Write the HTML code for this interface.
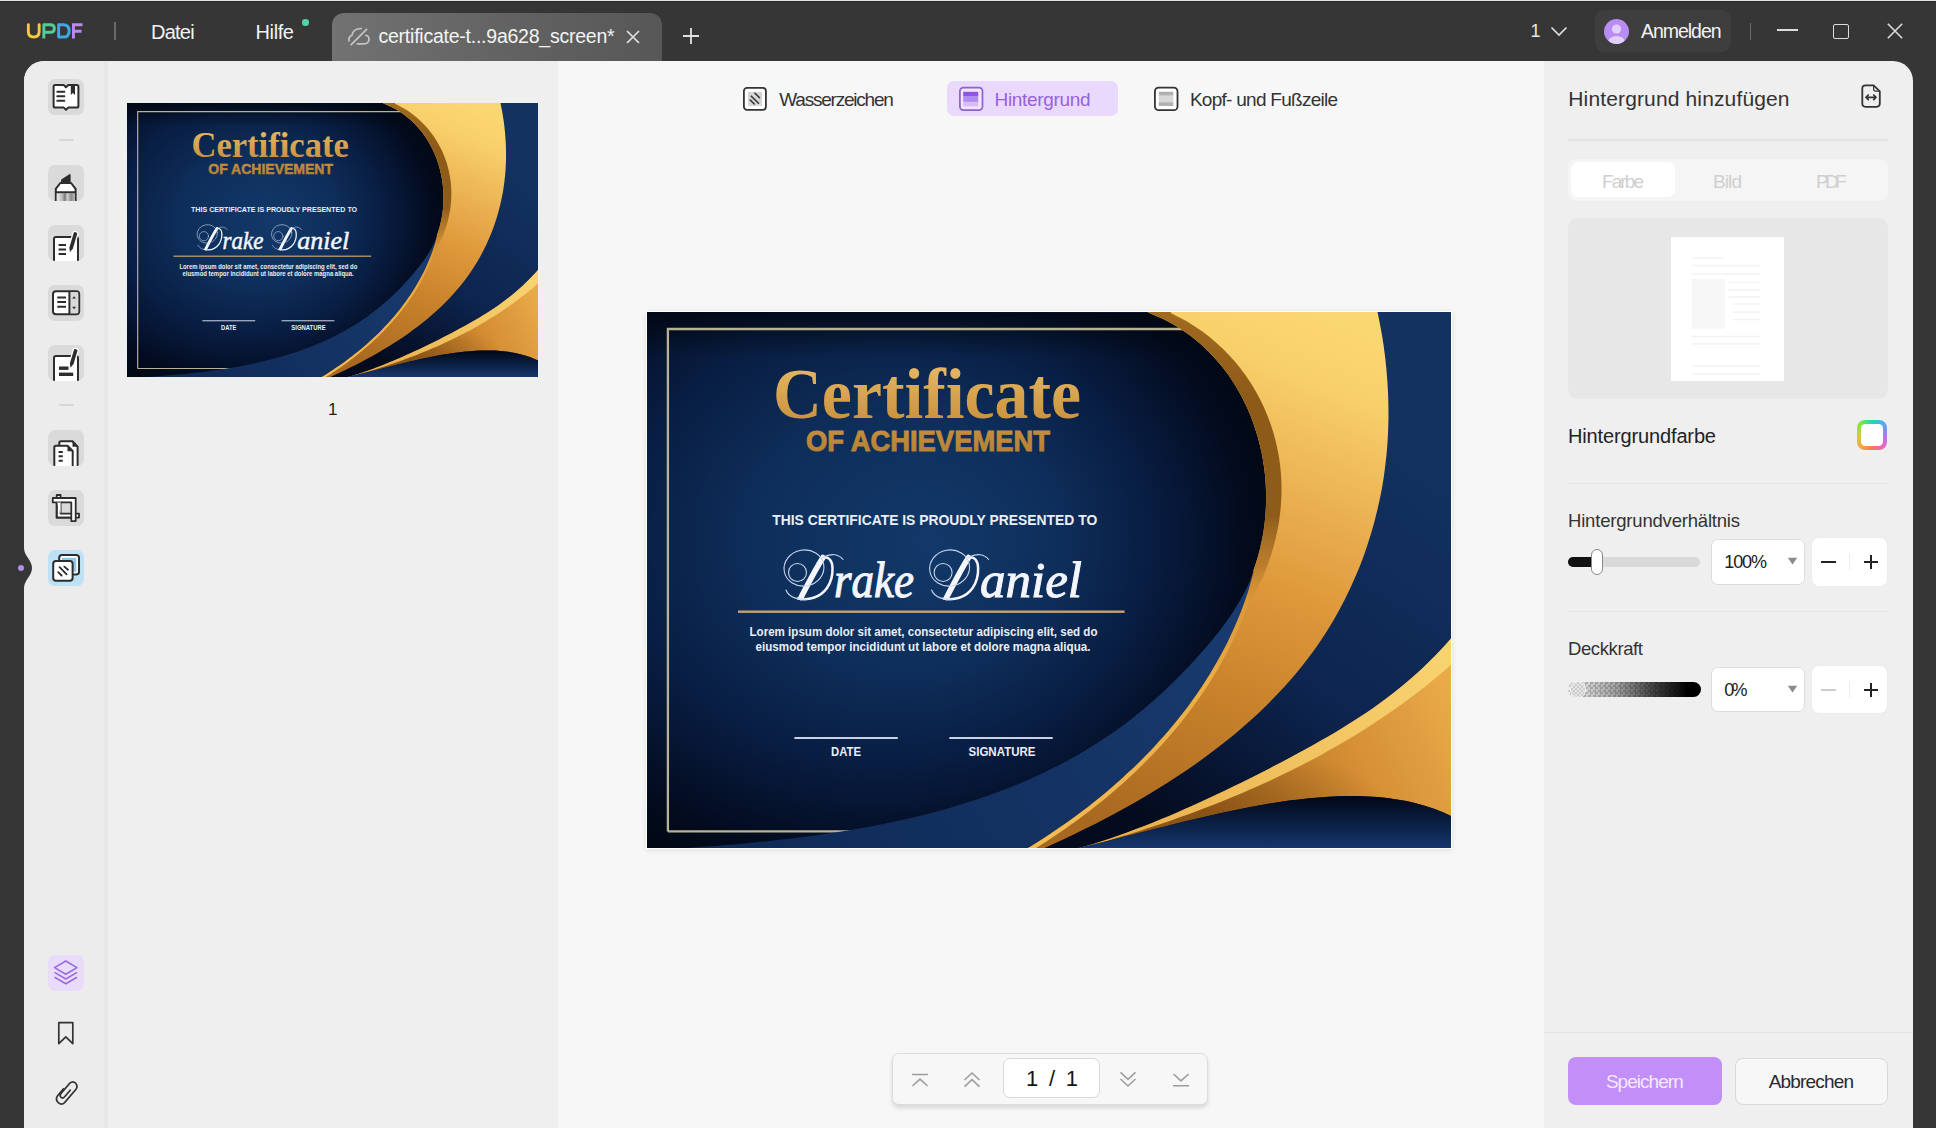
<!DOCTYPE html>
<html><head><meta charset="utf-8">
<style>
*{margin:0;padding:0;box-sizing:border-box}
html,body{width:1936px;height:1128px;overflow:hidden;background:#363636;font-family:"Liberation Sans",sans-serif}
.a{position:absolute}
.t{position:absolute;white-space:nowrap;line-height:1}
svg.a{overflow:visible}
.ib{position:absolute;left:48px;width:36px;height:36px;border-radius:7px;background:#dadada;overflow:hidden}
.ib svg{position:absolute;left:0;top:0}
</style></head>
<body>
<svg width="0" height="0" style="position:absolute;left:0;top:0"><defs>
<radialGradient id="gNavy" gradientUnits="userSpaceOnUse" cx="210" cy="225" r="440" fx="285" fy="232" gradientTransform="translate(210 225) scale(1 0.85) translate(-210 -225)">
<stop offset="0" stop-color="#12396a"/><stop offset="0.35" stop-color="#0e2e5a"/><stop offset="0.62" stop-color="#081c40"/><stop offset="0.85" stop-color="#030b1e"/><stop offset="1" stop-color="#01060f"/></radialGradient>
<linearGradient id="gTop" gradientUnits="userSpaceOnUse" x1="0" y1="0" x2="0" y2="45">
<stop offset="0" stop-color="#01060f" stop-opacity="0.75"/><stop offset="1" stop-color="#01060f" stop-opacity="0"/></linearGradient>
<linearGradient id="gBase" gradientUnits="userSpaceOnUse" x1="780" y1="150" x2="520" y2="520">
<stop offset="0" stop-color="#13325f"/><stop offset="0.55" stop-color="#0d2550"/><stop offset="1" stop-color="#040b1e"/></linearGradient>
<linearGradient id="gRib" gradientUnits="userSpaceOnUse" x1="600" y1="270" x2="150" y2="536">
<stop offset="0" stop-color="#193b70"/><stop offset="1" stop-color="#0f2b58"/></linearGradient>
<linearGradient id="gGold1" gradientUnits="userSpaceOnUse" x1="680" y1="0" x2="470" y2="520">
<stop offset="0" stop-color="#fbd772"/><stop offset="0.12" stop-color="#f8d06a"/><stop offset="0.3" stop-color="#ecb454"/><stop offset="0.48" stop-color="#df9a3c"/><stop offset="0.68" stop-color="#cb842c"/><stop offset="1" stop-color="#a86820"/></linearGradient>
<linearGradient id="gBrown" gradientUnits="userSpaceOnUse" x1="0" y1="0" x2="0" y2="300">
<stop offset="0" stop-color="#a06a20"/><stop offset="0.3" stop-color="#8d5a18"/><stop offset="0.68" stop-color="#8f5d1a" stop-opacity="1"/><stop offset="0.85" stop-color="#b07428" stop-opacity="0.75"/><stop offset="1" stop-color="#d69035" stop-opacity="0"/></linearGradient>
<linearGradient id="gGold2" gradientUnits="userSpaceOnUse" x1="804" y1="380" x2="520" y2="520">
<stop offset="0" stop-color="#eaaa4a"/><stop offset="0.4" stop-color="#d38c32"/><stop offset="1" stop-color="#a5661f"/></linearGradient>
<linearGradient id="gStripe" gradientUnits="userSpaceOnUse" x1="804" y1="330" x2="440" y2="536">
<stop offset="0" stop-color="#f8d470"/><stop offset="1" stop-color="#e8ad4c"/></linearGradient>
<linearGradient id="gWedge" gradientUnits="userSpaceOnUse" x1="0" y1="486" x2="0" y2="536">
<stop offset="0" stop-color="#02081a"/><stop offset="0.55" stop-color="#0b2248"/><stop offset="1" stop-color="#17366c"/></linearGradient>
<linearGradient id="gHL" gradientUnits="userSpaceOnUse" x1="600" y1="270" x2="400" y2="530">
<stop offset="0" stop-color="#f2b94f" stop-opacity="0"/><stop offset="0.3" stop-color="#f0b54c" stop-opacity="0.85"/><stop offset="1" stop-color="#f3bd55"/></linearGradient>
<radialGradient id="gB2dark" gradientUnits="userSpaceOnUse" cx="560" cy="505" r="130" gradientTransform="translate(560 505) scale(1.4 0.6) translate(-560 -505)">
<stop offset="0" stop-color="#7a4812" stop-opacity="0.75"/><stop offset="1" stop-color="#7a4812" stop-opacity="0"/></radialGradient>
<linearGradient id="gText" gradientUnits="userSpaceOnUse" x1="0" y1="58" x2="0" y2="140">
<stop offset="0" stop-color="#e4b560"/><stop offset="0.5" stop-color="#cf9845"/><stop offset="1" stop-color="#b88234"/></linearGradient>
<symbol id="cert" viewBox="0 0 804 536">
<rect x="0" y="0" width="804" height="536" fill="url(#gBase)"/>
<path d="M-1 -1 L501.1 0.6 508.8 3.7 516.2 7.1 523.4 10.8 530.4 14.8 537.1 19.2 543.5 23.8 549.7 28.7 555.6 33.8 561.3 39.2 566.7 44.9 571.9 50.7 576.8 56.8 581.5 63.1 585.8 69.5 590.0 76.2 593.8 83.0 597.4 90.0 600.7 97.1 603.8 104.3 606.5 111.7 609.0 119.2 611.3 126.8 613.2 134.4 614.9 142.1 616.3 149.9 617.4 157.8 618.3 165.7 618.8 173.6 619.1 181.5 619.1 189.4 618.8 197.3 618.3 205.2 617.4 213.1 616.3 220.9 614.8 228.6 613.1 236.3 611.1 244.0 608.8 251.5 606.2 258.9 607.0 258.9 605.0 266.3 602.9 273.6 600.6 280.9 598.2 288.1 595.6 295.2 592.9 302.3 590.0 309.3 587.0 316.2 583.9 323.1 580.7 329.9 577.3 336.6 573.7 343.3 570.1 349.8 566.3 356.3 562.5 362.8 558.5 369.1 554.4 375.4 550.1 381.7 545.8 387.8 541.4 393.9 536.8 399.9 532.2 405.8 527.4 411.7 522.6 417.5 517.7 423.2 512.6 428.8 507.5 434.4 502.3 439.9 497.1 445.3 491.7 450.7 486.3 455.9 480.7 461.1 475.2 466.3 469.5 471.3 463.8 476.3 458.0 481.2 452.1 486.0 446.2 490.7 440.3 495.4 434.2 500.0 428.2 504.5 422.0 508.9 415.9 513.3 409.6 517.5 403.4 521.7 397.1 525.9 390.8 529.9 384.4 533.9 378.0 537.8 L-1 540 Z" fill="url(#gNavy)"/>
<path d="M-1 -1 L501.1 0.6 508.8 3.7 516.2 7.1 523.4 10.8 530.4 14.8 537.1 19.2 543.5 23.8 549.7 28.7 555.6 33.8 561.3 39.2 566.7 44.9 571.9 50.7 576.8 56.8 581.5 63.1 585.8 69.5 590.0 76.2 593.8 83.0 597.4 90.0 600.7 97.1 603.8 104.3 606.5 111.7 609.0 119.2 611.3 126.8 613.2 134.4 614.9 142.1 616.3 149.9 617.4 157.8 618.3 165.7 618.8 173.6 619.1 181.5 619.1 189.4 618.8 197.3 618.3 205.2 617.4 213.1 616.3 220.9 614.8 228.6 613.1 236.3 611.1 244.0 608.8 251.5 606.2 258.9 607.0 258.9 605.0 266.3 602.9 273.6 600.6 280.9 598.2 288.1 595.6 295.2 592.9 302.3 590.0 309.3 587.0 316.2 583.9 323.1 580.7 329.9 577.3 336.6 573.7 343.3 570.1 349.8 566.3 356.3 562.5 362.8 558.5 369.1 554.4 375.4 550.1 381.7 545.8 387.8 541.4 393.9 536.8 399.9 532.2 405.8 527.4 411.7 522.6 417.5 517.7 423.2 512.6 428.8 507.5 434.4 502.3 439.9 497.1 445.3 491.7 450.7 486.3 455.9 480.7 461.1 475.2 466.3 469.5 471.3 463.8 476.3 458.0 481.2 452.1 486.0 446.2 490.7 440.3 495.4 434.2 500.0 428.2 504.5 422.0 508.9 415.9 513.3 409.6 517.5 403.4 521.7 397.1 525.9 390.8 529.9 384.4 533.9 378.0 537.8 L-1 540 Z" fill="url(#gTop)"/>
<path d="M20.9 519.4 V17 H560" fill="none" stroke="#b8b394" stroke-width="2.3"/>
<path d="M20.9 519.4 H260" fill="none" stroke="#b8b394" stroke-width="2.3"/>
<path d="M606.9 259.3 602.4 270.3 597.2 281.0 591.4 291.3 585.2 301.3 578.4 311.0 571.2 320.5 563.7 329.8 556.0 338.8 548.0 347.8 539.8 356.5 531.4 365.1 522.9 373.6 514.2 381.8 505.3 389.8 496.1 397.6 486.8 405.1 477.4 412.4 467.7 419.4 457.9 426.1 448.0 432.6 437.9 438.8 427.6 444.7 417.2 450.4 406.7 455.8 396.1 461.0 385.4 466.0 374.5 470.7 363.5 475.2 352.5 479.5 341.3 483.5 330.0 487.4 318.7 491.1 307.3 494.6 295.8 497.9 284.2 501.0 272.6 503.9 260.9 506.7 249.2 509.3 237.4 511.8 225.6 514.1 213.7 516.3 201.8 518.3 189.9 520.3 178.0 522.1 166.0 523.7 154.1 525.3 142.1 526.8 130.2 528.1 118.3 529.4 106.3 530.6 94.4 531.7 82.6 532.7 70.7 533.7 58.9 534.6 47.2 535.5 35.5 536.3 23.8 537.1 12.2 537.8 0.7 538.5 L-1 540 L378.0 537.8 384.4 533.9 390.8 529.9 397.1 525.9 403.4 521.7 409.6 517.5 415.9 513.3 422.0 508.9 428.2 504.5 434.2 500.0 440.3 495.4 446.2 490.7 452.1 486.0 458.0 481.2 463.8 476.3 469.5 471.3 475.2 466.3 480.7 461.1 486.3 455.9 491.7 450.7 497.1 445.3 502.3 439.9 507.5 434.4 512.6 428.8 517.7 423.2 522.6 417.5 527.4 411.7 532.2 405.8 536.8 399.9 541.4 393.9 545.8 387.8 550.1 381.7 554.4 375.4 558.5 369.1 562.5 362.8 566.3 356.3 570.1 349.8 573.7 343.3 577.3 336.6 580.7 329.9 583.9 323.1 587.0 316.2 590.0 309.3 592.9 302.3 595.6 295.2 598.2 288.1 600.6 280.9 602.9 273.6 605.0 266.3 607.0 258.9 Z" fill="url(#gRib)"/>
<path d="M501.9 -1 L501.1 0.6 508.8 3.7 516.2 7.1 523.4 10.8 530.4 14.8 537.1 19.2 543.5 23.8 549.7 28.7 555.6 33.8 561.3 39.2 566.7 44.9 571.9 50.7 576.8 56.8 581.5 63.1 585.8 69.5 590.0 76.2 593.8 83.0 597.4 90.0 600.7 97.1 603.8 104.3 606.5 111.7 609.0 119.2 611.3 126.8 613.2 134.4 614.9 142.1 616.3 149.9 617.4 157.8 618.3 165.7 618.8 173.6 619.1 181.5 619.1 189.4 618.8 197.3 618.3 205.2 617.4 213.1 616.3 220.9 614.8 228.6 613.1 236.3 611.1 244.0 608.8 251.5 606.2 258.9 607.0 258.9 605.0 266.3 602.9 273.6 600.6 280.9 598.2 288.1 595.6 295.2 592.9 302.3 590.0 309.3 587.0 316.2 583.9 323.1 580.7 329.9 577.3 336.6 573.7 343.3 570.1 349.8 566.3 356.3 562.5 362.8 558.5 369.1 554.4 375.4 550.1 381.7 545.8 387.8 541.4 393.9 536.8 399.9 532.2 405.8 527.4 411.7 522.6 417.5 517.7 423.2 512.6 428.8 507.5 434.4 502.3 439.9 497.1 445.3 491.7 450.7 486.3 455.9 480.7 461.1 475.2 466.3 469.5 471.3 463.8 476.3 458.0 481.2 452.1 486.0 446.2 490.7 440.3 495.4 434.2 500.0 428.2 504.5 422.0 508.9 415.9 513.3 409.6 517.5 403.4 521.7 397.1 525.9 390.8 529.9 384.4 533.9 378.0 537.8 L396 540 L395.8 536.9 406.2 532.1 416.7 527.3 427.1 522.3 437.6 517.1 448.1 511.9 458.5 506.5 468.9 500.9 479.3 495.3 489.6 489.4 499.8 483.4 510.0 477.3 520.1 471.0 530.1 464.6 540.0 458.0 549.7 451.2 559.3 444.2 568.8 437.1 578.2 429.8 587.3 422.4 596.3 414.7 605.1 406.9 613.8 398.9 622.2 390.7 630.3 382.3 638.3 373.7 646.0 364.9 653.5 355.9 660.7 346.8 667.6 337.4 674.3 327.8 680.6 317.9 686.7 307.9 692.4 297.7 697.9 287.3 703.0 276.8 707.8 266.1 712.4 255.2 716.6 244.2 720.4 233.1 724.0 221.8 727.2 210.5 730.1 199.0 732.7 187.5 735.0 175.9 736.9 164.3 738.4 152.6 739.7 140.8 740.6 129.0 741.2 117.2 741.5 105.4 741.4 93.6 741.1 81.8 740.4 70.0 739.5 58.2 738.3 46.5 736.8 34.8 735.0 23.2 732.9 11.7 730.6 0.2 L731.5 -1 Z" fill="url(#gGold1)"/>
<path d="M501.9 -1 L501.1 0.6 508.8 3.7 516.2 7.1 523.4 10.8 530.4 14.8 537.1 19.2 543.5 23.8 549.7 28.7 555.6 33.8 561.3 39.2 566.7 44.9 571.9 50.7 576.8 56.8 581.5 63.1 585.8 69.5 590.0 76.2 593.8 83.0 597.4 90.0 600.7 97.1 603.8 104.3 606.5 111.7 609.0 119.2 611.3 126.8 613.2 134.4 614.9 142.1 616.3 149.9 617.4 157.8 618.3 165.7 618.8 173.6 619.1 181.5 619.1 189.4 618.8 197.3 618.3 205.2 617.4 213.1 616.3 220.9 614.8 228.6 613.1 236.3 611.1 244.0 608.8 251.5 606.2 258.9 L596.7 299.8 601.5 292.3 606.0 284.7 610.2 276.8 614.1 268.8 617.7 260.5 621.0 252.1 623.9 243.6 626.5 235.0 628.7 226.2 630.6 217.4 632.2 208.5 633.3 199.6 634.1 190.6 634.5 181.6 634.5 172.6 634.1 163.7 633.3 154.8 632.1 146.0 630.5 137.2 628.5 128.5 626.2 119.9 623.4 111.5 620.3 103.2 616.8 95.0 612.9 87.0 608.7 79.2 604.1 71.6 599.2 64.2 593.9 57.0 588.3 50.1 582.4 43.4 576.1 37.0 569.5 30.9 562.6 25.1 555.4 19.6 547.9 14.4 540.1 9.6 532.0 5.2 523.6 1.1 L524.9 -1 Z" fill="url(#gBrown)"/>
<path d="M600.6 280.9 598.2 288.1 595.6 295.2 592.9 302.3 590.0 309.3 587.0 316.2 583.9 323.1 580.7 329.9 577.3 336.6 573.7 343.3 570.1 349.8 566.3 356.3 562.5 362.8 558.5 369.1 554.4 375.4 550.1 381.7 545.8 387.8 541.4 393.9 536.8 399.9 532.2 405.8 527.4 411.7 522.6 417.5 517.7 423.2 512.6 428.8 507.5 434.4 502.3 439.9 497.1 445.3 491.7 450.7 486.3 455.9 480.7 461.1 475.2 466.3 469.5 471.3 463.8 476.3 458.0 481.2 452.1 486.0 446.2 490.7 440.3 495.4 434.2 500.0 428.2 504.5 422.0 508.9 415.9 513.3 409.6 517.5 403.4 521.7 397.1 525.9 390.8 529.9 384.4 533.9 378.0 537.8 L380.2 541.3 386.6 537.5 393.0 533.5 399.4 529.4 405.7 525.2 412.0 521.0 418.3 516.7 424.5 512.3 430.6 507.9 436.8 503.3 442.8 498.7 448.8 494.0 454.8 489.2 460.7 484.4 466.5 479.5 472.3 474.5 478.0 469.4 483.6 464.2 489.2 459.0 494.6 453.7 500.0 448.3 505.4 442.8 510.6 437.3 515.8 431.7 520.8 426.0 525.8 420.2 530.7 414.4 535.5 408.5 540.1 402.5 544.7 396.4 549.2 390.3 553.6 384.1 557.9 377.8 562.0 371.4 566.0 365.0 570.0 358.5 573.8 351.9 577.4 345.2 581.0 338.5 584.4 331.7 587.7 324.9 590.9 317.9 593.9 310.9 596.8 303.8 599.5 296.7 602.1 289.5 604.6 282.2 Z" fill="url(#gHL)"/>
<path d="M805.7 324.5 799.7 331.4 793.7 338.0 787.5 344.5 781.1 350.8 774.7 357.0 768.1 363.0 761.4 368.8 754.6 374.5 747.7 380.1 740.6 385.5 733.5 390.8 726.3 395.9 719.0 400.9 711.6 405.8 704.1 410.6 696.6 415.3 689.0 419.9 681.3 424.4 673.6 428.8 665.9 433.2 658.1 437.5 650.2 441.8 642.4 446.0 634.5 450.2 626.6 454.3 618.7 458.4 610.8 462.5 602.8 466.5 594.8 470.4 586.8 474.3 578.8 478.2 570.7 482.0 562.7 485.8 554.6 489.5 546.5 493.2 538.4 496.8 530.2 500.4 522.1 503.9 513.9 507.3 505.7 510.7 497.4 514.0 489.1 517.1 480.8 520.2 472.4 523.2 464.0 526.2 455.6 529.0 447.1 531.7 438.5 534.3 429.9 536.7 L439.5 534.0 448.9 531.7 458.4 529.4 467.8 527.0 477.4 524.6 486.9 522.2 496.5 519.8 506.0 517.3 515.7 514.9 525.3 512.5 535.0 510.1 544.6 507.7 554.3 505.4 564.0 503.2 573.8 501.0 583.5 498.9 593.3 496.9 603.0 495.0 612.8 493.2 622.6 491.5 632.4 490.0 642.2 488.6 652.0 487.4 661.9 486.3 671.7 485.4 681.5 484.8 691.3 484.3 701.2 484.0 711.0 484.0 720.7 484.4 730.5 485.0 740.2 486.0 749.8 487.4 759.4 489.1 768.9 491.3 778.4 494.0 787.8 497.1 797.1 500.8 806.3 505.0 Z" fill="url(#gGold2)"/>
<path d="M805.7 324.5 799.7 331.4 793.7 338.0 787.5 344.5 781.1 350.8 774.7 357.0 768.1 363.0 761.4 368.8 754.6 374.5 747.7 380.1 740.6 385.5 733.5 390.8 726.3 395.9 719.0 400.9 711.6 405.8 704.1 410.6 696.6 415.3 689.0 419.9 681.3 424.4 673.6 428.8 665.9 433.2 658.1 437.5 650.2 441.8 642.4 446.0 634.5 450.2 626.6 454.3 618.7 458.4 610.8 462.5 602.8 466.5 594.8 470.4 586.8 474.3 578.8 478.2 570.7 482.0 562.7 485.8 554.6 489.5 546.5 493.2 538.4 496.8 530.2 500.4 522.1 503.9 513.9 507.3 505.7 510.7 497.4 514.0 489.1 517.1 480.8 520.2 472.4 523.2 464.0 526.2 455.6 529.0 447.1 531.7 438.5 534.3 429.9 536.7 L439.5 534.0 448.9 531.7 458.4 529.4 467.8 527.0 477.4 524.6 486.9 522.2 496.5 519.8 506.0 517.3 515.7 514.9 525.3 512.5 535.0 510.1 544.6 507.7 554.3 505.4 564.0 503.2 573.8 501.0 583.5 498.9 593.3 496.9 603.0 495.0 612.8 493.2 622.6 491.5 632.4 490.0 642.2 488.6 652.0 487.4 661.9 486.3 671.7 485.4 681.5 484.8 691.3 484.3 701.2 484.0 711.0 484.0 720.7 484.4 730.5 485.0 740.2 486.0 749.8 487.4 759.4 489.1 768.9 491.3 778.4 494.0 787.8 497.1 797.1 500.8 806.3 505.0 Z" fill="url(#gB2dark)"/>
<path d="M805.7 324.5 799.7 331.4 793.7 338.0 787.5 344.5 781.1 350.8 774.7 357.0 768.1 363.0 761.4 368.8 754.6 374.5 747.7 380.1 740.6 385.5 733.5 390.8 726.3 395.9 719.0 400.9 711.6 405.8 704.1 410.6 696.6 415.3 689.0 419.9 681.3 424.4 673.6 428.8 665.9 433.2 658.1 437.5 650.2 441.8 642.4 446.0 634.5 450.2 626.6 454.3 618.7 458.4 610.8 462.5 602.8 466.5 594.8 470.4 586.8 474.3 578.8 478.2 570.7 482.0 562.7 485.8 554.6 489.5 546.5 493.2 538.4 496.8 530.2 500.4 522.1 503.9 513.9 507.3 505.7 510.7 497.4 514.0 489.1 517.1 480.8 520.2 472.4 523.2 464.0 526.2 455.6 529.0 447.1 531.7 438.5 534.3 429.9 536.7 L430.1 537.2 440.5 534.3 450.9 531.4 461.3 528.4 471.7 525.3 482.0 522.2 492.4 518.9 502.7 515.6 513.0 512.2 523.3 508.7 533.5 505.1 543.7 501.4 553.9 497.6 564.0 493.7 574.1 489.7 584.2 485.6 594.2 481.4 604.1 477.1 614.0 472.7 623.9 468.2 633.7 463.6 643.4 458.8 653.1 454.0 662.7 449.0 672.3 443.9 681.7 438.6 691.2 433.3 700.5 427.8 709.7 422.2 718.9 416.5 728.0 410.6 737.0 404.6 745.9 398.5 754.8 392.2 763.5 385.8 772.1 379.2 780.7 372.5 789.1 365.6 797.5 358.6 805.7 351.5 Z" fill="url(#gStripe)"/>
<path d="M430.1 536.1 439.5 534.0 448.9 531.7 458.4 529.4 467.8 527.0 477.4 524.6 486.9 522.2 496.5 519.8 506.0 517.3 515.7 514.9 525.3 512.5 535.0 510.1 544.6 507.7 554.3 505.4 564.0 503.2 573.8 501.0 583.5 498.9 593.3 496.9 603.0 495.0 612.8 493.2 622.6 491.5 632.4 490.0 642.2 488.6 652.0 487.4 661.9 486.3 671.7 485.4 681.5 484.8 691.3 484.3 701.2 484.0 711.0 484.0 720.7 484.4 730.5 485.0 740.2 486.0 749.8 487.4 759.4 489.1 768.9 491.3 778.4 494.0 787.8 497.1 797.1 500.8 806.3 505.0 L806 540 L428 540 Z" fill="url(#gWedge)"/>
<text x="280" y="106" font-family="Liberation Serif" font-weight="bold" font-size="72" fill="url(#gText)" text-anchor="middle" textLength="308" lengthAdjust="spacingAndGlyphs">Certificate</text>
<text x="281" y="139.2" font-family="Liberation Sans" font-weight="bold" font-size="29" fill="url(#gText)" stroke="url(#gText)" stroke-width="0.9" text-anchor="middle" textLength="244" lengthAdjust="spacingAndGlyphs">OF ACHIEVEMENT</text>
<text x="287.7" y="212.6" font-family="Liberation Sans" font-weight="bold" font-size="14.5" fill="#e9eef7" text-anchor="middle" textLength="325" lengthAdjust="spacingAndGlyphs">THIS CERTIFICATE IS PROUDLY PRESENTED TO</text>
<g fill="#f4f6fb" stroke="#f4f6fb" stroke-width="1.0" font-family="Liberation Serif" font-style="italic">
<text x="187" y="285" font-size="51" textLength="80" lengthAdjust="spacingAndGlyphs">rake</text>
<text x="333" y="285" font-size="51" textLength="102" lengthAdjust="spacingAndGlyphs">aniel</text>
</g>
<g id="dD" fill="none" stroke="#f4f6fb" stroke-linecap="round">
<path d="M176 245.5 C168 258 161 272 154 285.5" stroke-width="5.6"/>
<path d="M176 245.5 C189 243 187 266 180 276 C173 286 161 288.5 151 286.5" stroke-width="2.5"/>
<g stroke="#c9d5ec" stroke-width="1.1">
<path d="M139 278 C142 286 152 288 160 287"/>
<ellipse cx="157" cy="256" rx="20" ry="18" transform="rotate(-10 157 256)"/>
<circle cx="150.5" cy="260.5" r="9"/>
<path d="M176 245.5 C184 240.5 192 242.5 196 247.5"/>
</g></g>
<use href="#dD" transform="translate(145.6 0)"/>
<rect x="91" y="298.5" width="386.6" height="2.4" fill="#c9a26a"/>
<text x="276.5" y="324.4" font-family="Liberation Sans" font-weight="bold" font-size="12.6" fill="#e9eef7" text-anchor="middle" textLength="348" lengthAdjust="spacingAndGlyphs">Lorem ipsum dolor sit amet, consectetur adipiscing elit, sed do</text>
<text x="276" y="338.9" font-family="Liberation Sans" font-weight="bold" font-size="12.6" fill="#e9eef7" text-anchor="middle" textLength="335" lengthAdjust="spacingAndGlyphs">eiusmod tempor incididunt ut labore et dolore magna aliqua.</text>
<rect x="147.4" y="425" width="103.4" height="2" fill="#c9d2e4"/>
<rect x="302.3" y="425" width="103.4" height="2" fill="#c9d2e4"/>
<text x="199" y="444.4" font-family="Liberation Sans" font-weight="bold" font-size="13" fill="#e9eef7" text-anchor="middle" textLength="30" lengthAdjust="spacingAndGlyphs">DATE</text>
<text x="355" y="444.4" font-family="Liberation Sans" font-weight="bold" font-size="13" fill="#e9eef7" text-anchor="middle" textLength="67" lengthAdjust="spacingAndGlyphs">SIGNATURE</text>
</symbol></defs></svg>
<div class="a" style="left:0;top:0;width:1936px;height:1px;background:#e4e4e4"></div><div class="a" style="left:0;top:1px;width:1936px;height:1px;background:#292929"></div>
<svg class="a" style="left:0;top:0" width="90" height="45" viewBox="0 0 90 45" fill="none" stroke-width="2.9">
<path d="M28.35 24.75 V31.6 Q28.35 37.05 33.75 37.05 Q39.15 37.05 39.15 31.6 V24.75" stroke="#f5c842" stroke-linecap="round"/>
<path d="M43.85 38.5 V24.75 H50.2 Q54.35 24.75 54.35 28.5 Q54.35 32.3 50.2 32.3 H43.85" stroke="#52cf95" stroke-linejoin="round"/>
<path d="M58.65 24.75 H63.2 Q69.15 24.75 69.15 30.9 Q69.15 37.05 63.2 37.05 H58.65 Z" stroke="#40a8e2" stroke-linejoin="round"/>
<path d="M73.45 38.5 V24.75 H82.5 M73.45 31.3 H81.6" stroke="#bb88f2"/>
</svg>
<div class="a" style="left:114px;top:22px;width:2px;height:18px;background:#6a6a6a"></div>
<div class="t" style="left:151.0px;top:21.7px;font-size:20px;color:#f2f2f2;letter-spacing:-0.78px;font-weight:400">Datei</div>
<div class="t" style="left:255.5px;top:21.7px;font-size:20px;color:#f2f2f2;letter-spacing:-0.38px;font-weight:400">Hilfe</div>
<div class="a" style="left:302px;top:19px;width:6.5px;height:6.5px;border-radius:50%;background:#4dd4a2"></div>
<div class="a" style="left:332px;top:13px;width:330px;height:48px;border-radius:12px 12px 0 0;background:linear-gradient(90deg,#727272 0%,#626262 55%,#575757 100%)"></div>
<svg class="a" style="left:347px;top:27px" width="24" height="20" viewBox="0 0 24 20" fill="none" stroke="#c4c4c4" stroke-width="1.7" stroke-linecap="round">
<path d="M1.9 13.8 C1.6 11 3 9 4.9 8.4 C5.4 4.6 8.4 1.6 14.3 1.5"/>
<path d="M18.8 8.3 C21.5 9 22.3 11.5 21.8 13.6 C21.2 16 19 16.9 16 16.9 H10.3"/>
<path d="M4.2 17.6 L19.6 2.4"/>
</svg>
<div class="t" style="left:378.5px;top:27.3px;font-size:19.5px;color:#f4f4f4;letter-spacing:-0.24px;font-weight:400">certificate-t...9a628_screen*</div>
<svg class="a" style="left:626px;top:30px" width="14" height="14" viewBox="0 0 14 14"><path d="M1 1 L13 13 M13 1 L1 13" stroke="#e0e0e0" stroke-width="1.7"/></svg>
<svg class="a" style="left:682px;top:27px" width="18" height="18" viewBox="0 0 18 18"><path d="M9 1 V17 M1 9 H17" stroke="#e0e0e0" stroke-width="1.8"/></svg>
<div class="t" style="left:1530.5px;top:22.3px;font-size:18px;color:#e6e6e6;letter-spacing:0.00px;font-weight:400">1</div>
<svg class="a" style="left:1550px;top:26px" width="18" height="11" viewBox="0 0 18 11"><path d="M1.5 1.5 L9 9 L16.5 1.5" fill="none" stroke="#dcdcdc" stroke-width="1.7"/></svg>
<div class="a" style="left:1595px;top:10px;width:136px;height:42px;border-radius:9px;background:#3e3e3e"></div>
<svg class="a" style="left:1603.5px;top:18.5px" width="25" height="25" viewBox="0 0 25 25">
<defs><clipPath id="avc"><circle cx="12.5" cy="12.5" r="12.5"/></clipPath></defs>
<circle cx="12.5" cy="12.5" r="12.5" fill="#b98cf2"/>
<g clip-path="url(#avc)"><circle cx="12.5" cy="10" r="4.6" fill="#e2cffb"/><ellipse cx="12.5" cy="22.5" rx="8" ry="5.5" fill="#e2cffb"/></g>
</svg>
<div class="t" style="left:1641.0px;top:21.8px;font-size:19.5px;color:#f2f2f2;letter-spacing:-1.03px;font-weight:400">Anmelden</div>
<div class="a" style="left:1749.5px;top:22.5px;width:1.6px;height:17px;background:#6a6a6a"></div>
<div class="a" style="left:1776.5px;top:29.3px;width:21px;height:1.6px;background:#dcdcdc"></div>
<div class="a" style="left:1833px;top:23.5px;width:15.6px;height:15px;border:1.6px solid #dcdcdc;border-radius:2px"></div>
<svg class="a" style="left:1887px;top:23px" width="16" height="16" viewBox="0 0 16 16"><path d="M0.8 0.8 L15.2 15.2 M15.2 0.8 L0.8 15.2" stroke="#dcdcdc" stroke-width="1.6"/></svg>
<div class="a" style="left:24px;top:61px;width:1889px;height:1067px;border-radius:20px 20px 0 0;overflow:hidden;background:#efefef">
  <div class="a" style="left:0;top:0;width:80px;height:1067px;background:#ececec"></div>
  <div class="a" style="left:80px;top:0;width:4px;height:1067px;background:#e8e8e8"></div>
  <div class="a" style="left:534px;top:0;width:986px;height:1067px;background:#f7f7f7"></div>
</div>
<div class="ib" style="top:79px;background:#dadada"><svg width="36" height="36" viewBox="0 0 36 36"><path d="M5.6 7.6 Q5.6 6 7.2 6 H15.8 L18 8.2 L20.2 6 H28.8 Q30.4 6 30.4 7.6 V27 Q30.4 28.6 28.8 28.6 H20.2 L18 30.8 L15.8 28.6 H7.2 Q5.6 28.6 5.6 27 Z" fill="#fff" stroke="#2d2d2d" stroke-width="2" stroke-linejoin="round"/>
<path d="M9.3 12.7 H16.3 M9.3 17.2 H16.3 M9.3 21.7 H16.3" stroke="#2d2d2d" stroke-width="2" stroke-linecap="round"/>
<path d="M22.8 6.5 V16 L24.9 13.9 L27 16 V6.5 Z" fill="#2d2d2d"/></svg></div>
<div class="a" style="left:59px;top:138.5px;width:15px;height:2px;background:#d6d6d6;border-radius:1px"></div>
<div class="ib" style="top:165px;background:#dadada"><svg width="36" height="36" viewBox="0 0 36 36"><defs><linearGradient id="hlg" x1="0" y1="0" x2="1" y2="0"><stop offset="0" stop-color="#e8e8e8"/><stop offset="0.3" stop-color="#bdbdbd"/><stop offset="0.45" stop-color="#7a7a7a"/><stop offset="0.6" stop-color="#cfcfcf"/><stop offset="0.8" stop-color="#8a8a8a"/><stop offset="1" stop-color="#b5b5b5"/></linearGradient></defs>
<path d="M13 18 V14.8 L21.3 9.3 Q22.6 8.6 22.6 10.2 V18 Z" fill="#2d2d2d"/>
<path d="M12.3 18 H23.1 L27.6 23.8 V40 H7.8 V23.8 Z" fill="#fff" stroke="#2d2d2d" stroke-width="2" stroke-linejoin="round"/>
<path d="M8.8 28.2 H26.6 V40 H8.8 Z" fill="url(#hlg)"/>
<path d="M7.8 27.3 H27.6" stroke="#2d2d2d" stroke-width="2"/></svg></div>
<div class="ib" style="top:225px;background:#dadada"><svg width="36" height="36" viewBox="0 0 36 36"><path d="M6 40 V14 Q6 12 8 12 H28 Q30 12 30 14 V40" fill="#fff" stroke="#2d2d2d" stroke-width="2"/>
<path d="M10.6 20 H18 M10.6 24.4 H18 M10.6 28.9 H18" stroke="#2d2d2d" stroke-width="2"/>
<path d="M25.4 6.8 Q27.8 5.6 30.1 8.2 L25.5 23.8 L21.5 28.6 L20.7 22.6 Z" fill="#2d2d2d" stroke="#fff" stroke-width="1.3" stroke-linejoin="round"/></svg></div>
<div class="ib" style="top:285px;background:#dadada"><svg width="36" height="36" viewBox="0 0 36 36"><rect x="5" y="6.3" width="26.2" height="23" rx="3" fill="#fff" stroke="#2d2d2d" stroke-width="2"/>
<path d="M21.5 7.3 H30.2 V28.3 H21.5 Z" fill="#d9d9d9"/>
<path d="M21.4 6.5 V29" stroke="#2d2d2d" stroke-width="2"/>
<path d="M9.3 12.4 H18 M9.3 17.1 H18 M9.3 21.8 H18" stroke="#2d2d2d" stroke-width="2"/>
<path d="M24.2 13.6 L26.1 11.2 L28 13.6 Z M24.2 21.8 L26.1 24.2 L28 21.8 Z" fill="#2d2d2d"/></svg></div>
<div class="ib" style="top:345px;background:#dadada"><svg width="36" height="36" viewBox="0 0 36 36"><path d="M6 40 V13 Q6 11 8 11 H28 Q30 11 30 13 V40" fill="#fff" stroke="#2d2d2d" stroke-width="2"/>
<rect x="11" y="21.5" width="9.5" height="3.4" fill="#2d2d2d"/><rect x="11" y="27.6" width="14.2" height="3.4" fill="#2d2d2d"/>
<path d="M25.7 3.6 Q28.1 2.4 30.4 5 L26.1 19.4 L22 24.2 L21.2 18.2 Z" fill="#2d2d2d" stroke="#fff" stroke-width="1.3" stroke-linejoin="round"/></svg></div>
<div class="a" style="left:59px;top:403.5px;width:15px;height:2px;background:#d6d6d6;border-radius:1px"></div>
<div class="ib" style="top:430px;background:#dadada"><svg width="36" height="36" viewBox="0 0 36 36"><path d="M11.3 40 V13 Q11.3 11.3 13 11.3 H24.5 L29.6 16.6 V40" fill="#fff" stroke="#2d2d2d" stroke-width="2" stroke-linejoin="round"/>
<path d="M24.5 11.8 V16.8 H29.3 Z" fill="#2d2d2d"/>
<path d="M6.3 40 V17.4 Q6.3 15.7 8 15.7 H19.5 L24.7 21 V40" fill="#fff" stroke="#2d2d2d" stroke-width="2" stroke-linejoin="round"/>
<path d="M19.5 16.2 V21.2 H24.4 Z" fill="#2d2d2d"/>
<path d="M10.6 22 H14.8 M10.6 26.3 H14.8 M10.6 30.7 H14.8" stroke="#2d2d2d" stroke-width="2"/></svg></div>
<div class="ib" style="top:490px;background:#dadada"><svg width="36" height="36" viewBox="0 0 36 36"><path d="M8.7 5 H12.6 V23.7 H31 V27.6 H8.7 Z" fill="#fff" stroke="#2d2d2d" stroke-width="1.8" stroke-linejoin="round"/>
<path d="M4.8 8 H27.7 V31.1 H23.3 V12.4 H4.8 Z" fill="#fff" stroke="#2d2d2d" stroke-width="1.8" stroke-linejoin="round"/>
<path d="M8.7 12.4 H12.6 V23.7" fill="#fff" stroke="none"/>
<path d="M8.7 12.4 V27.6 H23.3" fill="none" stroke="#2d2d2d" stroke-width="1.8"/></svg></div>
<div class="ib" style="top:550px;background:#bde2f6"><svg width="36" height="36" viewBox="0 0 36 36"><rect x="11.2" y="5" width="19.8" height="19.6" rx="2.8" fill="#fff" stroke="#2d2d2d" stroke-width="2"/>
<rect x="14" y="7.8" width="14.3" height="14" fill="#8fc6ea"/>
<rect x="5.2" y="10.9" width="19.4" height="19.8" rx="2.8" fill="#fff" stroke="#2d2d2d" stroke-width="2"/>
<path d="M10.2 22.2 L13.6 25.5 M11.6 17.2 L18.6 24.3 M16.3 16.6 L20 19.7" stroke="#2d2d2d" stroke-width="1.8" stroke-linecap="round"/></svg></div>
<svg class="a" style="left:22px;top:548px" width="12" height="40" viewBox="0 0 12 40"><path d="M0 0 H2 C2 8 10 12 10 20 C10 28 2 32 2 40 H0 Z" fill="#363636"/></svg>
<div class="a" style="left:17.8px;top:564.7px;width:6.4px;height:6.4px;border-radius:50%;background:#b48cf0"></div>
<div class="ib" style="top:955px;background:#e9dcfb"><svg width="36" height="36" viewBox="0 0 36 36"><path d="M17.8 6 L29 12.6 L17.8 19.2 L6.6 12.6 Z" fill="none" stroke="#9a6be0" stroke-width="1.6" stroke-linejoin="round"/>
<path d="M6.6 17.4 L17.8 24 L29 17.4 M6.6 22.2 L17.8 28.8 L29 22.2" fill="none" stroke="#9a6be0" stroke-width="1.6" stroke-linejoin="round"/></svg></div>
<svg class="a" style="left:57px;top:1021px" width="18" height="24" viewBox="0 0 18 24"><path d="M1.8 1.6 H15.8 V22.6 L8.8 15.8 L1.8 22.6 Z" fill="none" stroke="#333" stroke-width="1.7" stroke-linejoin="round"/></svg>
<svg class="a" style="left:54px;top:1079px" width="26" height="28" viewBox="0 0 26 28"><path d="M9.5 9.8 L3.6 16.8 Q1 20.2 4.2 23.6 Q7.6 26.6 10.6 23.6 L22 10.2 Q24.2 7.2 21.6 4.2 Q18.8 1.6 15.6 4.4 L6.8 14.8 Q5.4 16.8 7 18.4 Q8.8 19.8 10.4 18 L16.2 11.2" fill="none" stroke="#333" stroke-width="1.7" stroke-linecap="round"/></svg>
<svg class="a" style="left:127px;top:103px" width="411" height="274"><use href="#cert"/></svg>
<div class="t" style="left:328px;top:401px;font-size:17px;color:#222">1</div>
<div class="a" style="left:646px;top:311px;width:806px;height:538px;background:#fff;box-shadow:0 1px 6px rgba(0,0,0,0.10)"></div>
<svg class="a" style="left:647px;top:312px" width="804" height="536"><use href="#cert"/></svg>
<svg class="a" style="left:742px;top:86px" width="26" height="26" viewBox="0 0 26 26">
<rect x="1.9" y="1.9" width="22" height="22" rx="3.2" fill="#fff" stroke="#333" stroke-width="1.8"/>
<rect x="6" y="5.8" width="14" height="14.2" fill="#d6d6d6"/>
<path d="M9.3 10.2 L16.5 17.2 M8.2 14 L12.3 18 M13 7.2 L17.6 11.7" stroke="#333" stroke-width="1.6" stroke-linecap="round"/>
</svg>
<div class="t" style="left:779.3px;top:89.8px;font-size:19px;color:#333333;letter-spacing:-1.22px;font-weight:400">Wasserzeichen</div>
<div class="a" style="left:947px;top:81px;width:170.6px;height:35.4px;border-radius:7px;background:#e9d9fc"></div>
<svg class="a" style="left:958px;top:86px" width="26" height="26" viewBox="0 0 26 26">
<rect x="1.9" y="1.6" width="22.6" height="22.6" rx="3.6" fill="#f3e3fd" stroke="#8b63c9" stroke-width="1.7"/>
<rect x="5.2" y="5.8" width="15" height="4.2" fill="#8d55e6"/>
<rect x="5.2" y="10" width="15" height="5.9" fill="#b28bf0"/>
<rect x="5.2" y="15.9" width="15" height="4.5" fill="#d7bcf8"/>
</svg>
<div class="t" style="left:994.6px;top:89.8px;font-size:19px;color:#9a60e0;letter-spacing:-0.34px;font-weight:400">Hintergrund</div>
<svg class="a" style="left:1153px;top:86px" width="26" height="26" viewBox="0 0 26 26">
<rect x="1.9" y="1.6" width="22.6" height="22.6" rx="3.8" fill="#fff" stroke="#333" stroke-width="1.8"/>
<defs><linearGradient id="kfg" x1="0" y1="0" x2="0" y2="1"><stop offset="0" stop-color="#aaaaaa"/><stop offset="0.22" stop-color="#b5b5b5"/><stop offset="0.3" stop-color="#d8d8d8"/><stop offset="0.7" stop-color="#d8d8d8"/><stop offset="0.78" stop-color="#b5b5b5"/><stop offset="1" stop-color="#aaaaaa"/></linearGradient></defs>
<rect x="5.8" y="5.8" width="14.5" height="14.1" fill="url(#kfg)"/>
</svg>
<div class="t" style="left:1189.9px;top:89.8px;font-size:19px;color:#333333;letter-spacing:-0.72px;font-weight:400">Kopf- und Fußzeile</div>
<div class="a" style="left:892px;top:1052.5px;width:316px;height:52px;border-radius:7px;background:#f7f7f7;border:1px solid #dcdcdc;box-shadow:0 3px 4px rgba(0,0,0,0.13)"></div>
<svg class="a" style="left:910px;top:1071px" width="20" height="18" viewBox="0 0 20 18"><path d="M2 3.5 H18 M2.5 15 L10 8.2 L17.5 15" fill="none" stroke="#9d9d9d" stroke-width="1.6"/></svg>
<svg class="a" style="left:962px;top:1070px" width="20" height="19" viewBox="0 0 20 19"><path d="M2.5 10 L10 3 L17.5 10 M2.5 16.6 L10 9.6 L17.5 16.6" fill="none" stroke="#9d9d9d" stroke-width="1.6"/></svg>
<div class="a" style="left:1003px;top:1058.3px;width:97.4px;height:40.2px;border-radius:7px;background:#fff;border:1px solid #d9d9d9"></div>
<div class="t" style="left:1026.0px;top:1067.8px;font-size:22px;color:#151515;letter-spacing:2.30px;font-weight:400">1 / 1</div>
<svg class="a" style="left:1118px;top:1070px" width="20" height="19" viewBox="0 0 20 19"><path d="M2.5 2.4 L10 9.4 L17.5 2.4 M2.5 9 L10 16 L17.5 9" fill="none" stroke="#9d9d9d" stroke-width="1.6"/></svg>
<svg class="a" style="left:1171px;top:1071px" width="20" height="18" viewBox="0 0 20 18"><path d="M2.5 3 L10 9.8 L17.5 3 M2 14.8 H18" fill="none" stroke="#9d9d9d" stroke-width="1.6"/></svg>
<div class="t" style="left:1568.3px;top:88.2px;font-size:21px;color:#333333;letter-spacing:0.14px;font-weight:400">Hintergrund hinzufügen</div>
<svg class="a" style="left:1860px;top:83px" width="22" height="26" viewBox="0 0 22 26">
<path d="M5.5 2.3 H13.6 L19.8 8.4 V20.6 Q19.8 23.8 16.6 23.8 H5.5 Q2.3 23.8 2.3 20.6 V5.5 Q2.3 2.3 5.5 2.3 Z" fill="none" stroke="#333" stroke-width="1.8" stroke-linejoin="round"/>
<path d="M13.6 2.6 V6 Q13.6 8.2 15.8 8.2 H19.6" fill="none" stroke="#333" stroke-width="1.2"/>
<path d="M6 14.3 H16 M8.3 12 L6 14.3 L8.3 16.6 M13.7 12 L16 14.3 L13.7 16.6" fill="none" stroke="#333" stroke-width="1.7" stroke-linecap="round" stroke-linejoin="round"/>
</svg>
<div class="a" style="left:1568px;top:139px;width:320px;height:2px;background:#e3e3e3"></div>
<div class="a" style="left:1568px;top:158.5px;width:319.6px;height:42.3px;border-radius:8px;background:#f5f5f5"></div>
<div class="a" style="left:1570.5px;top:161.8px;width:104.5px;height:35.7px;border-radius:7px;background:#fff"></div>
<div class="t" style="left:1602.0px;top:171.5px;font-size:19px;color:#cfcfcf;letter-spacing:-1.90px;font-weight:400">Farbe</div>
<div class="t" style="left:1713.0px;top:171.5px;font-size:19px;color:#cfcfcf;letter-spacing:-0.90px;font-weight:400">Bild</div>
<div class="t" style="left:1816.0px;top:171.5px;font-size:19px;color:#cfcfcf;letter-spacing:-3.70px;font-weight:400">PDF</div>
<div class="a" style="left:1568px;top:218px;width:319.6px;height:180.6px;border-radius:9px;background:#e7e7e7"></div>
<div class="a" style="left:1671px;top:236.7px;width:112.8px;height:144px;background:#fff"></div>
<svg class="a" style="left:1671px;top:236.7px" width="113" height="144" viewBox="0 0 113 144">
<g stroke="#f3f3f3" stroke-width="1.4"><path d="M21 21 H52 M21 28.5 H89 M21 37 H89 M21 129 H89 M21 137 H89"/>
<path d="M57 45.5 H89 M57 53 H89 M57 60 H89 M62 67 H89 M62 75 H89 M62 82.5 H89"/></g>
<rect x="21" y="42" width="33" height="50" fill="#f7f7f7"/>
<path d="M21 99.5 H89 M21 107 H89" stroke="#f3f3f3" stroke-width="1.4"/>
</svg>
<div class="t" style="left:1568.0px;top:426.4px;font-size:20px;color:#222222;letter-spacing:-0.14px;font-weight:400">Hintergrundfarbe</div>
<div class="a" style="left:1857px;top:420px;width:30px;height:30px;border-radius:8px;background:conic-gradient(#1ed8b5 0deg,#55a8f2 45deg,#a67de8 90deg,#f062c4 135deg,#f27a56 180deg,#f5a846 225deg,#c9d236 270deg,#7ae83a 315deg,#1ed8b5 360deg)"></div>
<div class="a" style="left:1861.4px;top:424.4px;width:21.2px;height:21.2px;border-radius:4.5px;background:#fff"></div>
<div class="a" style="left:1568px;top:482.5px;width:320px;height:1.5px;background:#e3e3e3"></div>
<div class="t" style="left:1568.0px;top:511.8px;font-size:18.5px;color:#333333;letter-spacing:-0.19px;font-weight:400">Hintergrundverhältnis</div>
<div class="a" style="left:1568px;top:557.4px;width:132.4px;height:9.6px;border-radius:5px;background:#d9d9d9"></div>
<div class="a" style="left:1568px;top:557.4px;width:30px;height:9.6px;border-radius:5px 0 0 5px;background:#111"></div>
<div class="a" style="left:1591.3px;top:549px;width:12.2px;height:26.3px;border-radius:6px;background:#fff;border:1.5px solid #8a8a8a"></div>
<div class="a" style="left:1710.7px;top:538.7px;width:94.6px;height:46.69999999999993px;border-radius:7px;background:#fff;border:1px solid #dcdcdc"></div><div class="t" style="left:1724.3px;top:553.4px;font-size:18px;color:#222222;letter-spacing:-1.10px;font-weight:400">100%</div><svg class="a" style="left:1787px;top:557.4px" width="11" height="8" viewBox="0 0 11 8"><path d="M0.8 0.8 H10.2 L5.5 7.4 Z" fill="#8a8a8a"/></svg>
<div class="a" style="left:1812.2px;top:538.2px;width:74.5px;height:47.799999999999955px;border-radius:7px;background:#fff;box-shadow:0 0 2px rgba(0,0,0,0.06)"></div><div class="a" style="left:1820.8px;top:561.3px;width:15.2px;height:1.7px;background:#222"></div><div class="a" style="left:1849px;top:553.7px;width:1px;height:16.7px;background:#ececec"></div><div class="a" style="left:1863.7px;top:561.3px;width:14.3px;height:1.7px;background:#222"></div><div class="a" style="left:1870px;top:555.0px;width:1.7px;height:14.3px;background:#222"></div>
<div class="a" style="left:1568px;top:610.5px;width:320px;height:1.5px;background:#e3e3e3"></div>
<div class="t" style="left:1568.0px;top:639.8px;font-size:18.5px;color:#333333;letter-spacing:-0.39px;font-weight:400">Deckkraft</div>
<div class="a" style="left:1568px;top:681.9px;width:133px;height:15.2px;border-radius:8px;background:linear-gradient(90deg,rgba(0,0,0,0.05) 0%,rgba(0,0,0,0.35) 35%,rgba(0,0,0,0.75) 65%,#000 90%),repeating-conic-gradient(#d0d0d0 0 25%,#ffffff 0 50%) 0 0/5px 5px"></div>
<div class="a" style="left:1569.5px;top:681px;width:16.5px;height:16.5px;border-radius:50%;background:repeating-conic-gradient(#c8c8c8 0 25%,#e8e8e8 0 50%) 0 0/4px 4px;border:1.5px solid #f2f2f2"></div>
<div class="a" style="left:1710.7px;top:666.8px;width:94.6px;height:45.5px;border-radius:7px;background:#fff;border:1px solid #dcdcdc"></div><div class="t" style="left:1724.3px;top:681.3px;font-size:18px;color:#222222;letter-spacing:-2.90px;font-weight:400">0%</div><svg class="a" style="left:1787px;top:684.9px" width="11" height="8" viewBox="0 0 11 8"><path d="M0.8 0.8 H10.2 L5.5 7.4 Z" fill="#8a8a8a"/></svg>
<div class="a" style="left:1812.2px;top:666.3px;width:74.5px;height:46.700000000000045px;border-radius:7px;background:#fff;box-shadow:0 0 2px rgba(0,0,0,0.06)"></div><div class="a" style="left:1820.8px;top:688.9px;width:15.2px;height:1.7px;background:#cccccc"></div><div class="a" style="left:1849px;top:681.2px;width:1px;height:16.7px;background:#ececec"></div><div class="a" style="left:1863.7px;top:688.9px;width:14.3px;height:1.7px;background:#222"></div><div class="a" style="left:1870px;top:682.5px;width:1.7px;height:14.3px;background:#222"></div>
<div class="a" style="left:1544px;top:1031.5px;width:369px;height:1.5px;background:#e2e2e2"></div>
<div class="a" style="left:1568px;top:1057.3px;width:154px;height:47.4px;border-radius:8px;background:#c18ff7"></div>
<div class="t" style="left:1605.9px;top:1071.9px;font-size:19px;color:#f4e9ff;letter-spacing:-0.96px;font-weight:400">Speichern</div>
<div class="a" style="left:1735px;top:1057.7px;width:152.7px;height:47px;border-radius:8px;background:#f7f7f7;border:1px solid #d9d9d9"></div>
<div class="t" style="left:1768.7px;top:1071.9px;font-size:19px;color:#2a2a2a;letter-spacing:-0.83px;font-weight:400">Abbrechen</div>
</body></html>
